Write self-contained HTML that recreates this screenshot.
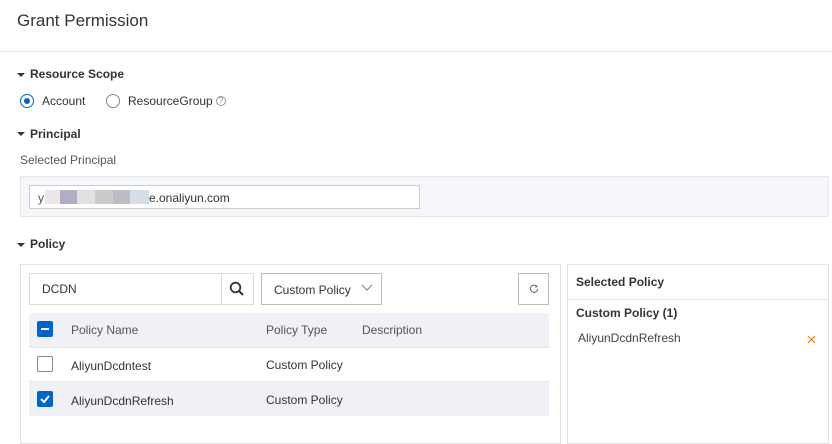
<!DOCTYPE html>
<html><head><style>
*{margin:0;padding:0;box-sizing:border-box}
body{width:832px;height:437px;overflow:hidden;background:#fff;font-family:"Liberation Sans",sans-serif;color:#333;font-size:12px;position:relative}
.a{position:absolute;white-space:nowrap}
.h{font-weight:bold;font-size:12px;color:#333}
.tri{position:absolute;width:0;height:0;border-left:4px solid transparent;border-right:4px solid transparent;border-top:4px solid #333}
.cb{position:absolute;width:16px;height:16px;border-radius:2px}
</style></head><body>
<div class="a" style="left:17px;top:11px;font-size:17px;color:#333">Grant Permission</div>
<div class="a" style="left:0;top:51px;width:832px;height:1px;background:#e5e5e5"></div>

<div class="tri" style="left:17px;top:73px"></div>
<div class="a h" style="left:30px;top:67px">Resource Scope</div>
<div class="a" style="left:20px;top:94px;width:14px;height:14px;border:1px solid #0064c8;border-radius:50%"><div style="position:absolute;left:3px;top:3px;width:6px;height:6px;border-radius:50%;background:#0064c8"></div></div>
<div class="a" style="left:42px;top:94px">Account</div>
<div class="a" style="left:106px;top:94px;width:14px;height:14px;border:1px solid #888;border-radius:50%"></div>
<div class="a" style="left:128px;top:94px">ResourceGroup</div>
<div class="a" style="left:216px;top:96px;width:10px;height:10px;border:1px solid #999;border-radius:50%;font-size:8px;line-height:8px;text-align:center;color:#888">?</div>

<div class="tri" style="left:17px;top:132px"></div>
<div class="a h" style="left:30px;top:127px">Principal</div>
<div class="a" style="left:20px;top:153px;color:#555">Selected Principal</div>
<div class="a" style="left:20px;top:176px;width:809px;height:41px;background:#f4f6f9;border:1px solid #e3e6ea"></div>
<div class="a" style="left:29px;top:185px;width:391px;height:24px;background:#fff;border:1px solid #ccc"></div>
<div class="a" style="left:38px;top:191px;color:#555">y</div>
<div class="a" style="left:45px;top:190px;width:15px;height:14px;background:#ebe7e6"></div>
<div class="a" style="left:60px;top:190px;width:17px;height:14px;background:#b3acc6"></div>
<div class="a" style="left:77px;top:190px;width:18px;height:14px;background:#e0e0e0"></div>
<div class="a" style="left:95px;top:190px;width:18px;height:14px;background:#cbcbce"></div>
<div class="a" style="left:113px;top:190px;width:17px;height:14px;background:#bcbcc6"></div>
<div class="a" style="left:130px;top:190px;width:19px;height:14px;background:#d5dde6"></div>
<div class="a" style="left:149px;top:191px;color:#333">e.onaliyun.com</div>

<div class="tri" style="left:17px;top:243px"></div>
<div class="a h" style="left:30px;top:237px">Policy</div>

<div class="a" style="left:20px;top:264px;width:541px;height:180px;border:1px solid #e3e3e3"></div>
<div class="a" style="left:29px;top:273px;width:225px;height:32px;border:1px solid #ddd"></div>
<div class="a" style="left:221px;top:273px;width:1px;height:32px;background:#ddd"></div>
<div class="a" style="left:42px;top:282px">DCDN</div>
<svg class="a" style="left:229px;top:281px" width="16" height="16" viewBox="0 0 16 16"><circle cx="6.5" cy="6.5" r="4.8" fill="none" stroke="#333" stroke-width="1.8"/><path d="M10 10l4 4" stroke="#333" stroke-width="2"/></svg>
<div class="a" style="left:261px;top:273px;width:121px;height:32px;border:1px solid #bbb"></div>
<div class="a" style="left:274px;top:283px">Custom Policy</div>
<svg class="a" style="left:361px;top:284px" width="12" height="8" viewBox="0 0 12 8"><path d="M1 1l5 5 5-5" fill="none" stroke="#888" stroke-width="1.2"/></svg>
<div class="a" style="left:518px;top:273px;width:31px;height:32px;border:1px solid #bbb"></div>
<svg class="a" style="left:529px;top:284px" width="10" height="10" viewBox="0 0 10 10"><path d="M7.8 2.5A3.6 3.6 0 1 0 8.6 5" fill="none" stroke="#666" stroke-width="1"/><path d="M6.5 1.2l1.6 1.4-1.9.6" fill="none" stroke="#666" stroke-width="1"/></svg>

<div class="a" style="left:29px;top:313px;width:520px;height:34px;background:#eff1f6"></div>
<div class="a" style="left:29px;top:347px;width:520px;height:1px;background:#e3e6ea"></div>
<div class="a" style="left:29px;top:381px;width:520px;height:35px;background:#eff1f6"></div>
<div class="a" style="left:29px;top:381px;width:520px;height:1px;background:#e3e6ea"></div>
<div class="cb" style="left:37px;top:321px;background:#0064c8"><div style="position:absolute;left:4px;top:7px;width:8px;height:2px;background:#fff"></div></div>
<div class="a" style="left:71px;top:323px;color:#555">Policy Name</div>
<div class="a" style="left:266px;top:323px;color:#555">Policy Type</div>
<div class="a" style="left:362px;top:323px;color:#555">Description</div>
<div class="cb" style="left:37px;top:356px;border:1px solid #888;background:#fff"></div>
<div class="a" style="left:71px;top:359px">AliyunDcdntest</div>
<div class="a" style="left:266px;top:358px">Custom Policy</div>
<div class="cb" style="left:37px;top:391px;background:#0064c8"><svg width="16" height="16" viewBox="0 0 16 16" style="position:absolute;left:0;top:0"><path d="M4 8l3 3 5-6" fill="none" stroke="#fff" stroke-width="2"/></svg></div>
<div class="a" style="left:71px;top:394px">AliyunDcdnRefresh</div>
<div class="a" style="left:266px;top:393px">Custom Policy</div>

<div class="a" style="left:567px;top:264px;width:262px;height:180px;border:1px solid #e3e3e3"></div>
<div class="a" style="left:567px;top:299px;width:262px;height:1px;background:#e3e3e3"></div>
<div class="a h" style="left:576px;top:275px">Selected Policy</div>
<div class="a h" style="left:576px;top:306px">Custom Policy (1)</div>
<div class="a" style="left:578px;top:331px;color:#444">AliyunDcdnRefresh</div>
<svg class="a" style="left:807px;top:335px" width="9" height="9" viewBox="0 0 9 9"><path d="M1 1l7 7M8 1l-7 7" stroke="#e07b2a" stroke-width="1.2"/></svg>
</body></html>
